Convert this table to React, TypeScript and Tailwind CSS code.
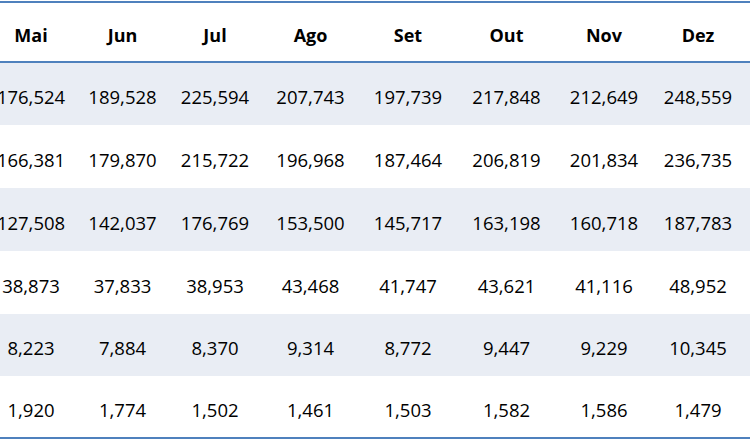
const months = ["Mai", "Jun", "Jul", "Ago", "Set", "Out", "Nov", "Dez"];

const rows: { values: string[]; h: string; band: boolean }[] = [
  { values: ["176,524", "189,528", "225,594", "207,743", "197,739", "217,848", "212,649", "248,559"], h: "h-[62px]", band: true },
  { values: ["166,381", "179,870", "215,722", "196,968", "187,464", "206,819", "201,834", "236,735"], h: "h-[63px]", band: false },
  { values: ["127,508", "142,037", "176,769", "153,500", "145,717", "163,198", "160,718", "187,783"], h: "h-[63px]", band: true },
  { values: ["38,873", "37,833", "38,953", "43,468", "41,747", "43,621", "41,116", "48,952"], h: "h-[63px]", band: false },
  { values: ["8,223", "7,884", "8,370", "9,314", "8,772", "9,447", "9,229", "10,345"], h: "h-[62px]", band: true },
  { values: ["1,920", "1,774", "1,502", "1,461", "1,503", "1,582", "1,586", "1,479"], h: "h-[61px]", band: false },
];

const cols = "grid grid-cols-[77px_91px_94px_97px_98px_99px_96px_98px]";

function Cell({ children, i, bold }: { children: string; i: number; bold?: boolean }) {
  const pad = i === 0 ? "pr-[15px]" : i === 7 ? "pr-[6px]" : "";
  return (
    <div
      className={`flex items-center justify-center whitespace-nowrap pt-[6px] ${pad} ${
        bold ? "font-bold text-[18px]" : "text-[18.5px]"
      }`}
    >
      {children}
    </div>
  );
}

export default function App() {
  return (
    <div
      className="h-[442px] w-[750px] overflow-hidden bg-white pt-px text-black"
      style={{ fontFamily: '"Open Sans", "Noto Sans", sans-serif' }}
    >
      <div className="border-y-2 border-[#4f81bd]">
        <div className={`${cols} h-[60px] border-b-2 border-[#4f81bd]`}>
          {months.map((m, i) => (
            <Cell key={m} i={i} bold>
              {m}
            </Cell>
          ))}
        </div>
        {rows.map((r, ri) => (
          <div key={ri} className={`${cols} ${r.h} ${r.band ? "bg-[#e9edf4]" : "bg-white"}`}>
            {r.values.map((v, i) => (
              <Cell key={i} i={i}>
                {v}
              </Cell>
            ))}
          </div>
        ))}
      </div>
    </div>
  );
}
